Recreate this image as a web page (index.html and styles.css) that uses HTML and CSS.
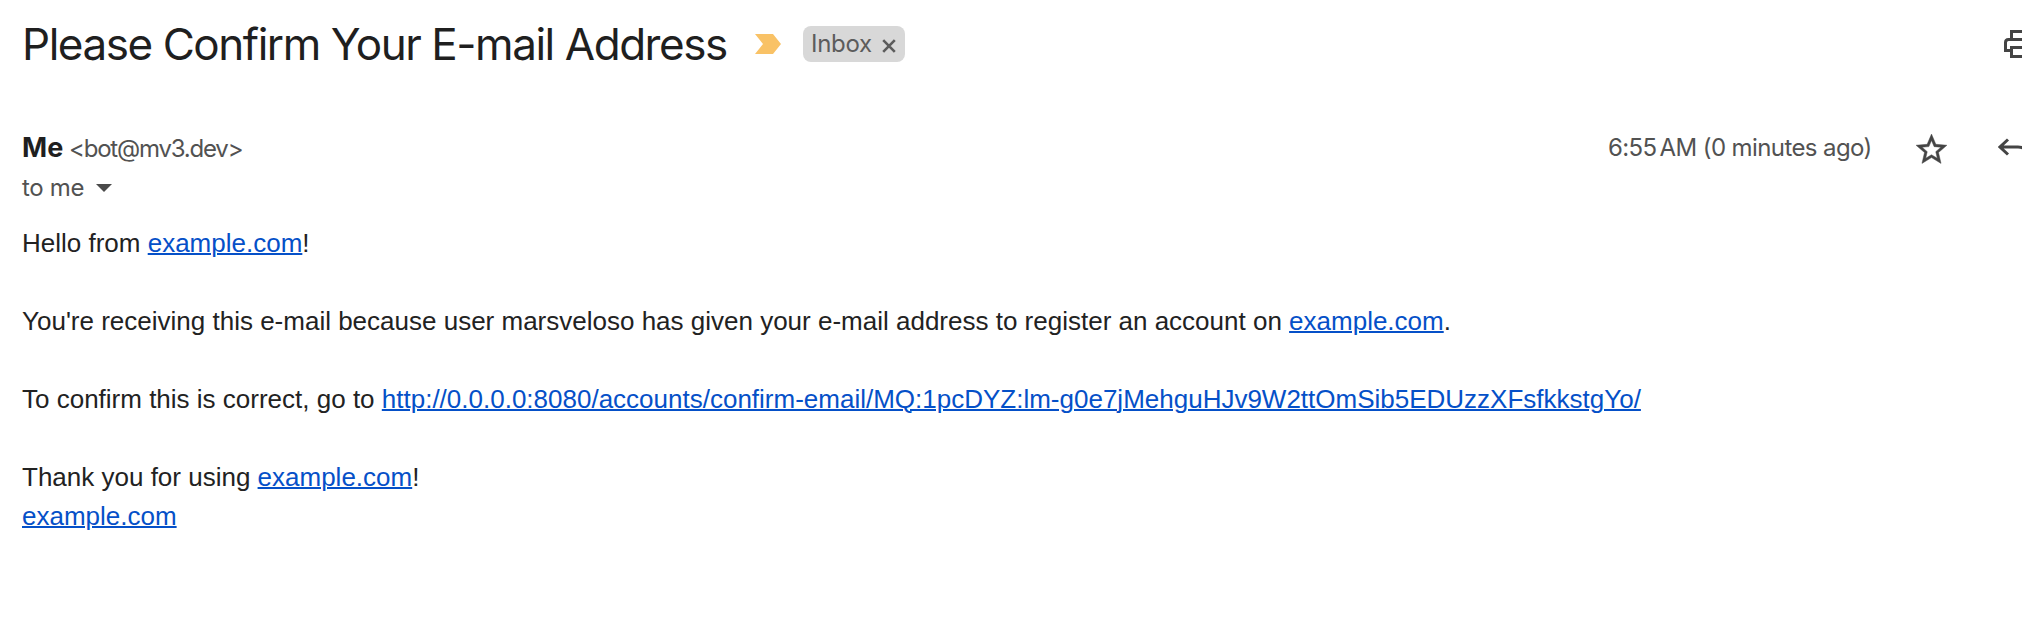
FILE: index.html
```html
<!DOCTYPE html>
<html lang="en">
<head>
<meta charset="utf-8">
<title>Please Confirm Your E-mail Address</title>
<link rel="stylesheet" href="styles.css">
</head>
<body>
<main class="mail">
  <header class="subject-row">
    <h1 class="subject">Please Confirm Your E-mail Address</h1>
    <svg class="important" viewBox="0 0 26 20"><path d="M0 0H18L26 10L18 20H0L8 10Z"/></svg>
    <span class="label"><span class="label-name">Inbox</span><svg class="label-close" viewBox="0 0 14 14"><path d="M1.2 1.2L12.8 12.8M12.8 1.2L1.2 12.8"/></svg></span>
    <svg class="icon print" viewBox="0 0 36 28"><path d="M7.5 9.5V1.5H28.5V9.5M7.5 20.5H1.5V12.5Q1.5 9.5 4.5 9.5H31.5Q34.5 9.5 34.5 12.5V20.5H28.5M7.5 17.5H28.5V26.5H7.5Z"/></svg>
  </header>
  <section class="sender-row">
    <div class="sender"><b class="name">Me</b><span class="address">&lt;bot@mv3.dev&gt;</span></div>
    <time class="time">6:55<span class="ampm">AM</span> (0 minutes ago)</time>
    <svg class="star" viewBox="0 0 24 24"><path d="M22 9.24l-7.19-.62L12 2 9.19 8.63 2 9.24l5.46 4.73L5.82 21 12 17.27 18.18 21l-1.63-7.03L22 9.24zM12 15.4l-3.76 2.27 1-4.28-3.32-2.88 4.38-.38L12 6.1l1.71 4.04 4.38.38-3.32 2.88 1 4.28L12 15.4z"/></svg>
    <svg class="icon reply" viewBox="0 0 36 28"><path d="M10 1.5L2 9L10 16.5M2 9H20Q29 9 29 18V24"/></svg>
  </section>
  <div class="recipient"><span>to me</span><svg class="caret" viewBox="0 0 16 8"><path d="M0 0H16L8 8Z"/></svg></div>
  <article class="body">
    <p>Hello from <a href="#">example.com</a>!</p>
    <p>You're receiving this e-mail because user marsveloso has given your e-mail address to register an account on <a href="#">example.com</a>.</p>
    <p>To confirm this is correct, go to <a href="#">http://0.0.0.0:8080/accounts/confirm-email/MQ:1pcDYZ:lm-g0e7jMehguHJv9W2ttOmSib5EDUzzXFsfkkstgYo/</a></p>
    <p>Thank you for using <a href="#">example.com</a>!<br><a href="#">example.com</a></p>
  </article>
</main>
</body>
</html>
```
FILE: styles.css
```css
body { margin: 0; background: #fff; color: #1f1f1f; overflow: hidden; }
.mail { width: 2022px; height: 622px; padding-left: 22px; box-sizing: border-box; overflow: hidden; font-family: Inter, Roboto, sans-serif; white-space: nowrap; }
.subject-row, .sender-row { display: flex; align-items: center; }
.subject-row > *, .sender-row > * { flex: none; }
.subject-row { height: 88px; }
.subject { margin: 0; width: 733px; font-size: 44px; font-weight: 400; line-height: 56px; letter-spacing: -1.45px; }
.important { width: 26px; height: 20px; fill: #f9c266; }
.label { display: flex; align-items: center; box-sizing: border-box; width: 102px; height: 36px; margin-left: 22px; padding-left: 8px; border-radius: 8px; background: #d8d8d8; color: #5c5c5c; font-size: 24px; line-height: 34px; }
.label-name { width: 71px; letter-spacing: -0.3px; }
.label-close { width: 14px; height: 14px; margin-top: 3px; fill: none; stroke: #5c5c5c; stroke-width: 2.6; }
.icon { fill: none; stroke: #444; stroke-width: 3; }
.print { width: 36px; height: 28px; margin-left: 1099px; }
.sender-row { height: 56px; margin-top: 33px; }
.sender { display: flex; align-items: baseline; width: 1586px; line-height: 40px; margin-top: -2px; }
.name { width: 47px; font-size: 27px; font-weight: 700; }
.address { font-size: 24px; color: #525252; letter-spacing: -1.2px; }
.time { width: 285px; font-size: 24px; line-height: 40px; margin-top: -3px; color: #525252; letter-spacing: -0.6px; }
.ampm { margin-left: 3px; }
.star { width: 37px; height: 37px; margin-left: 20px; margin-top: 1px; fill: #444; stroke: #444; stroke-width: 0.3; }
.reply { width: 36px; height: 28px; margin-left: 48px; margin-top: 5px; }
.recipient { display: flex; align-items: center; height: 40px; margin-top: -10px; font-size: 24px; color: #525252; }
.recipient span { width: 74px; letter-spacing: -0.3px; }
.caret { width: 16px; height: 8px; margin-top: 2px; fill: #4a4a4a; }
.body { margin-top: 17px; font: 26px/39px "Liberation Sans", Arial, sans-serif; color: #222; }
.body p { margin: 0 0 39px; }
.body a { color: #0550c8; text-decoration-thickness: 2px; }
```
